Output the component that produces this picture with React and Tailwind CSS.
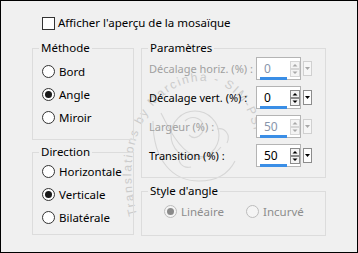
import React from 'react';

// Windows-style dialog: "Afficher l'aperçu de la mosaïque"

const Radio = ({ checked, disabled, label }) => (
  <div className="flex items-center gap-[4px] h-[23px] whitespace-nowrap">
    <span
      className={`shrink-0 w-[13px] h-[13px] rounded-full border flex items-center justify-center ${
        disabled ? 'border-[#bcbcbc] bg-[#f4f4f4]' : 'border-[#333333] bg-white'
      }`}
    >
      {checked && (
        <span className={`w-[7px] h-[7px] rounded-full ${disabled ? 'bg-[#8a8a8a]' : 'bg-[#1a1a1a]'}`} />
      )}
    </span>
    <span className={`leading-[16px] ${disabled ? 'text-[#8d8d8d]' : 'text-black'}`}>{label}</span>
  </div>
);

const Group = ({ title, children, className = '' }) => (
  <fieldset className={`border border-[#dcdcdc] m-0 p-0 min-w-0 ${className}`}>
    <legend className="ml-[6px] px-[2px] leading-[16px] text-black whitespace-nowrap">{title}</legend>
    {children}
  </fieldset>
);

const Spinner = ({ disabled }) => {
  const c = disabled ? '#a8a8a8' : '#000000';
  const b = disabled ? '#d6d6d6' : '#8c8c8c';
  return (
    <svg width="10" height="16" viewBox="0 0 10 16">
      <rect x="0.5" y="0.5" width="9" height="7" fill="#f4f4f4" stroke={b} />
      <path d="M2.5 5.5 L5 3 L7.5 5.5 Z" fill={c} />
      <rect x="0.5" y="8.5" width="9" height="7" fill="#f4f4f4" stroke={b} />
      <path d="M2.5 10.5 L5 13 L7.5 10.5 Z" fill={c} />
    </svg>
  );
};

const SpinBox = ({ value, disabled }) => (
  <div className="flex items-center gap-[2px] shrink-0">
    <div className="w-[45px] h-[23px] border border-[#b4b4b4] bg-white flex items-center">
      <div className="w-[33px] flex flex-col pl-[3px] pt-[3px]">
        <div className={`pl-[4px] leading-[15px] h-[15px] text-[12px] ${disabled ? 'text-[#8795ab]' : 'text-black'}`}>{value}</div>
        <div className="mt-[1px] h-[3px] w-[27px] bg-[#3a8ee6]" />
      </div>
      <div className="ml-[1px] flex">
        <Spinner disabled={disabled} />
      </div>
    </div>
    <div
      className={`w-[9px] h-[15px] flex items-center justify-center border ${
        disabled ? 'border-[#d0d0d0] bg-[#f6f6f6]' : 'border-[#8c8c8c] bg-[#fdfdfd]'
      }`}
    >
      <svg width="5" height="3" viewBox="0 0 5 3">
        <path d="M0 0 L5 0 L2.5 3 Z" fill={disabled ? '#a8a8a8' : '#000000'} />
      </svg>
    </div>
  </div>
);

const ParamRow = ({ label, value, disabled }) => (
  <div className="flex items-center justify-between h-[23px] pr-[13px]">
    <span className={`leading-[16px] whitespace-nowrap ${disabled ? 'text-[#a0a0a0]' : 'text-black'}`}>{label}</span>
    <SpinBox value={value} disabled={disabled} />
  </div>
);

// faint translator watermark drawn over the dialog
const Watermark = () => (
  <svg
    className="absolute left-0 top-0 pointer-events-none"
    width="358"
    height="253"
    viewBox="0 0 358 253"
  >
    <defs>
      <path id="wm-arc" d="M136 214 C116 140 152 82 200 80 C238 80 262 118 254 178" />
    </defs>
    <text fill="#cbcbcb" fontSize="12" letterSpacing="1.8" fontFamily="Liberation Sans, sans-serif">
      <textPath href="#wm-arc">Translations by Marcinha - SIM-PSP</textPath>
    </text>
    <g fill="none" stroke="#d6d6d6" strokeWidth="1.1">
      <circle cx="194" cy="134" r="24" />
      <path d="M152 120 C152 160 172 180 198 180 C216 180 228 172 234 160" />
      <path d="M160 112 C168 128 178 148 192 154 C202 158 214 154 220 146" />
      <path d="M184 120 C190 114 200 116 202 124 C204 134 194 140 188 134" />
      <path d="M178 152 C176 162 182 168 190 166" />
      <path d="M216 128 C224 126 230 134 226 142" />
    </g>
  </svg>
);

const App = () => {
  return (
    <div
      className="relative w-[358px] h-[253px] border border-black bg-[#f0f0f0] text-[11px] text-black overflow-hidden"
      style={{ fontFamily: '"Noto Sans", "Open Sans", sans-serif' }}
    >
      <Watermark />

      {/* Checkbox row */}
      <div className="relative pl-[41px] pt-[14px] flex items-center gap-[3px] h-[30px] whitespace-nowrap">
        <span className="w-[13px] h-[13px] border border-[#333333] bg-white" />
        <span className="leading-[16px] text-[11.5px]">Afficher l'aperçu de la mosaïque</span>
      </div>

      <div className="relative flex gap-[7px] pl-[31px] mt-[9px]">
        {/* Left column */}
        <div className="flex flex-col w-[102px] gap-[4px] text-[11.5px]">
          <Group title="Méthode">
            <div className="pl-[9px] pt-[4px] pb-[10px]">
              <Radio label="Bord" />
              <Radio label="Angle" checked />
              <Radio label="Miroir" />
            </div>
          </Group>
          <Group title="Direction">
            <div className="pl-[9px] pb-[5px]">
              <Radio label="Horizontale" />
              <Radio label="Verticale" checked />
              <Radio label="Bilatérale" />
            </div>
          </Group>
        </div>

        {/* Right column */}
        <div className="flex flex-col w-[185px] gap-[5px]">
          <Group title="Paramètres" className="text-[11.5px]">
            <div className="pl-[7px] pt-[1px] pb-[10px] flex flex-col gap-[6px] text-[11px]">
              <ParamRow label="Décalage horiz. (%) :" value="0" disabled />
              <ParamRow label="Décalage vert. (%) :" value="0" />
              <ParamRow label="Largeur (%) :" value="50" disabled />
              <ParamRow label="Transition (%) :" value="50" />
            </div>
          </Group>
          <Group title="Style d'angle" className="text-[11.5px]">
            <div className="pl-[22px] pt-[1px] pb-[12px] flex">
              <div className="w-[82px]">
                <Radio label="Linéaire" checked disabled />
              </div>
              <Radio label="Incurvé" disabled />
            </div>
          </Group>
        </div>
      </div>
    </div>
  );
};

export default App;
